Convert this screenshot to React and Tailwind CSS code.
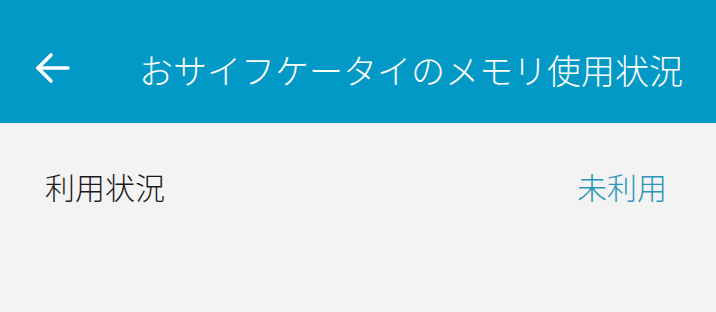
import React from "react";

const font = { fontFamily: '"Noto Sans CJK JP", "Noto Sans", sans-serif' };

const App = () => {
  return (
    <div className="w-[716px] h-[312px] bg-[#f3f3f3] flex flex-col" style={font}>
      <header className="h-[123px] bg-[#0399c6] flex items-center text-white">
        <button className="w-[106px] h-full flex items-center pl-[35px] pt-[12px]">
          <svg width="35" height="32" viewBox="0 0 35 32" fill="none" stroke="white" strokeWidth="3.6" strokeLinecap="round" strokeLinejoin="round">
            <path d="M3 16H33" />
            <path d="M16 3L3 16L16 29" />
          </svg>
        </button>
        <h1 className="pl-[33px] text-[34px] font-light leading-none pt-[16px]">
          おサイフケータイのメモリ使用状況
        </h1>
      </header>
      <div className="flex items-center justify-between pl-[45px] pr-[49px] pt-[48px]">
        <span className="text-[30px] font-light leading-none text-[#1a1a1a]">利用状況</span>
        <span className="text-[30px] font-light leading-none text-[#2a95b8]">未利用</span>
      </div>
    </div>
  );
};

export default App;
